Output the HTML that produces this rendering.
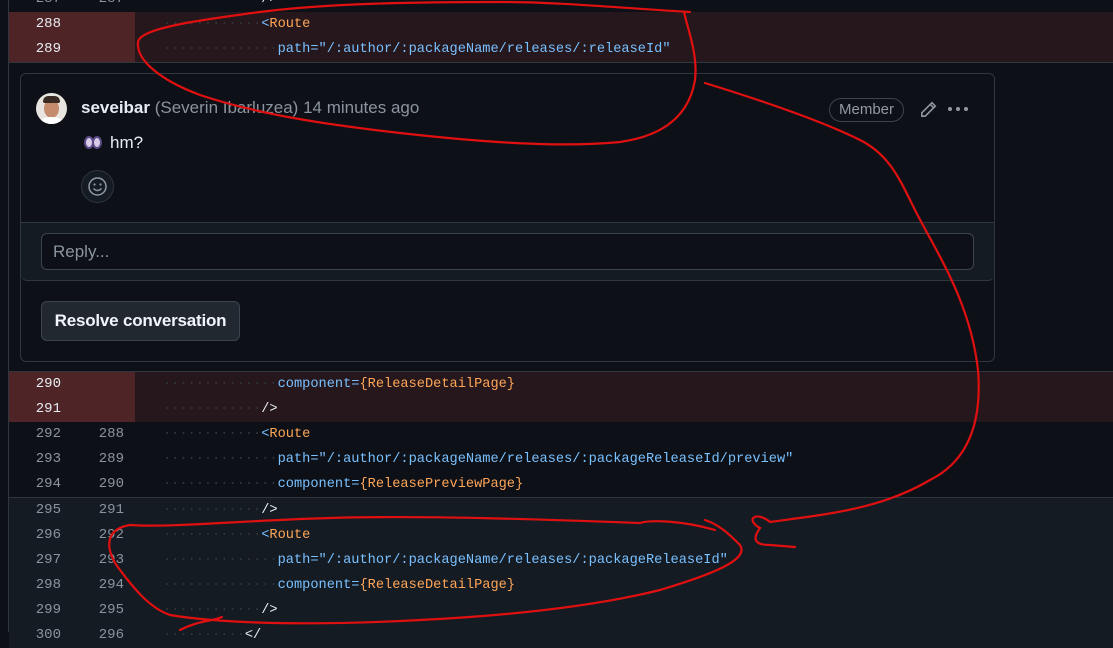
<!DOCTYPE html>
<html><head><style>
*{margin:0;padding:0;box-sizing:border-box}
body{width:1113px;height:632px;overflow:hidden;background:#0d1117;position:relative;font-family:"Liberation Sans",sans-serif}
.row{position:absolute;left:9px;right:0;height:25px;font-family:"Liberation Mono",monospace;font-size:13.65px;line-height:25px;color:#e6edf3}
.n1,.n2{position:absolute;top:0;text-align:right;color:#8b949e;font-size:14px}
.n1{left:0;width:52px}.n2{left:0;width:115px}
.c{position:absolute;left:154px;white-space:pre}
.d{color:#2f343b}
.del{background:#25171c}.del .nb{position:absolute;left:0;top:0;width:126px;height:25px;background:#4f2427}
.del .n1{color:#e6edf3}
.ctx{background:#151b23}
.b{color:#79c0ff}.o{color:#ffa657}
.vl{position:absolute;left:8px;top:0;width:1px;height:632px;background:#30363d}
</style></head><body>
<div class="vl"></div>
<div class="row" style="top:-13px"><span class="n1">287</span><span class="n2">287</span><span class="c"><span class="d">············</span>/&gt;</span></div>
<div class="row del" style="top:12px"><div class="nb"></div><span class="n1">288</span><span class="c"><span class="d">············</span><span class="b">&lt;</span><span class="o">Route</span></span></div>
<div class="row del" style="top:37px"><div class="nb"></div><span class="n1">289</span><span class="c"><span class="d">··············</span><span class="b">path="/:author/:packageName/releases/:releaseId"</span></span></div>
<div style="position:absolute;left:9px;right:0;top:62px;height:1px;background:#30363d"></div>

<div style="position:absolute;left:20px;top:73px;width:975px;height:289px;border:1px solid #30363d;border-radius:6px;background:#0d1117">
 <div style="position:absolute;left:15px;top:19px;width:31px;height:31px;border-radius:50%;background:#e8e4e0;overflow:hidden"><div style="position:absolute;left:8px;top:6px;width:15px;height:19px;border-radius:50%;background:#c48b6c"></div><div style="position:absolute;left:7px;top:3px;width:17px;height:7px;border-radius:6px 6px 2px 2px;background:#3a2a22"></div><div style="position:absolute;left:4px;top:24px;width:23px;height:10px;border-radius:50%;background:#fff"></div></div>
 <div style="position:absolute;left:60px;top:24px;font-size:17px;color:#8b949e;white-space:nowrap"><b style="color:#e6edf3">seveibar</b> (Severin Ibarluzea) 14 minutes ago</div>
 <div style="position:absolute;left:808px;top:24px;width:75px;height:24px;border:1px solid #3d444d;border-radius:12px;color:#9198a1;font-size:15px;text-align:center;line-height:22px">Member</div>
 <svg style="position:absolute;left:898px;top:27px" width="18" height="18" viewBox="0 0 16 16"><path d="M11.5 1.5l3 3-9 9H2.5v-3z M10 3l3 3" fill="none" stroke="#9198a1" stroke-width="1.4"/></svg>
 <div style="position:absolute;left:927px;top:33px;width:20px;height:4px"><span style="position:absolute;left:0;width:4px;height:4px;border-radius:50%;background:#9198a1"></span><span style="position:absolute;left:8px;width:4px;height:4px;border-radius:50%;background:#9198a1"></span><span style="position:absolute;left:16px;width:4px;height:4px;border-radius:50%;background:#9198a1"></span></div>
 <div style="position:absolute;left:63px;top:62px;width:10px;height:13px;border-radius:50%;background:#d8cce8;border:2px solid #5a4a86"></div>
 <div style="position:absolute;left:71px;top:62px;width:10px;height:13px;border-radius:50%;background:#d8cce8;border:2px solid #5a4a86"></div>
 <div style="position:absolute;left:89px;top:59px;font-size:17px;color:#e6edf3">hm?</div>
 <div style="position:absolute;left:60px;top:96px;width:33px;height:33px;border-radius:50%;border:1px solid #30363d;background:#151b23"><svg width="31" height="31" viewBox="0 0 31 31"><circle cx="15.5" cy="15.5" r="8.5" fill="none" stroke="#9198a1" stroke-width="1.5"/><circle cx="12.5" cy="13.5" r="1.1" fill="#9198a1"/><circle cx="18.5" cy="13.5" r="1.1" fill="#9198a1"/><path d="M11.5 17.5q4 4 8 0" fill="none" stroke="#9198a1" stroke-width="1.4"/></svg></div>
 <div style="position:absolute;left:0;top:148px;width:973px;height:59px;border-top:1px solid #30363d;border-bottom:1px solid #30363d;border-radius:0 0 6px 6px;background:#151b23">
  <div style="position:absolute;left:20px;top:10px;width:933px;height:37px;border:1px solid #3d444d;border-radius:6px;background:#0d1117;color:#8b949e;font-size:17px;line-height:35px;padding-left:11px">Reply...</div>
 </div>
 <div style="position:absolute;left:20px;top:227px;width:199px;height:40px;border:1px solid #3d444d;border-radius:6px;background:#212830;color:#f0f6fc;font-size:17px;font-weight:bold;line-height:38px;text-align:center;letter-spacing:-0.2px">Resolve conversation</div>
</div>

<div style="position:absolute;left:9px;right:0;top:371px;height:1px;background:#30363d"></div>
<div class="row del" style="top:372px"><div class="nb"></div><span class="n1">290</span><span class="c"><span class="d">··············</span><span class="b">component=</span><span class="o">{ReleaseDetailPage}</span></span></div>
<div class="row del" style="top:397px"><div class="nb"></div><span class="n1">291</span><span class="c"><span class="d">············</span>/&gt;</span></div>
<div class="row" style="top:422px"><span class="n1">292</span><span class="n2">288</span><span class="c"><span class="d">············</span><span class="b">&lt;</span><span class="o">Route</span></span></div>
<div class="row" style="top:447px"><span class="n1">293</span><span class="n2">289</span><span class="c"><span class="d">··············</span><span class="b">path="/:author/:packageName/releases/:packageReleaseId/preview"</span></span></div>
<div class="row" style="top:472px"><span class="n1">294</span><span class="n2">290</span><span class="c"><span class="d">··············</span><span class="b">component=</span><span class="o">{ReleasePreviewPage}</span></span></div>
<div style="position:absolute;left:9px;right:0;top:497px;height:1px;background:#30363d"></div>
<div class="row ctx" style="top:498px"><span class="n1">295</span><span class="n2">291</span><span class="c"><span class="d">············</span>/&gt;</span></div>
<div class="row ctx" style="top:523px"><span class="n1">296</span><span class="n2">292</span><span class="c"><span class="d">············</span><span class="b">&lt;</span><span class="o">Route</span></span></div>
<div class="row ctx" style="top:548px"><span class="n1">297</span><span class="n2">293</span><span class="c"><span class="d">··············</span><span class="b">path="/:author/:packageName/releases/:packageReleaseId"</span></span></div>
<div class="row ctx" style="top:573px"><span class="n1">298</span><span class="n2">294</span><span class="c"><span class="d">··············</span><span class="b">component=</span><span class="o">{ReleaseDetailPage}</span></span></div>
<div class="row ctx" style="top:598px"><span class="n1">299</span><span class="n2">295</span><span class="c"><span class="d">············</span>/&gt;</span></div>
<div class="row ctx" style="top:623px"><span class="n1">300</span><span class="n2">296</span><span class="c"><span class="d">··········</span>&lt;/</span></div>

<svg style="position:absolute;left:0;top:0" width="1113" height="632" viewBox="0 0 1113 632"><g fill="none" stroke="#e01010" stroke-width="2.2" stroke-linecap="round">
<path d="M690 12 C620 8 560 2 500 2 C420 2 330 3 260 12 C200 20 140 28 138 42 C136 60 160 80 200 95 C260 115 330 125 400 133 C480 142 560 148 620 142 C670 135 690 110 695 80 C698 55 688 30 684 12"/>
<path d="M705 83 C760 100 820 120 860 140 C890 155 900 180 915 210 C935 250 970 300 978 370 C982 420 970 460 930 480 C880 510 820 515 770 522 M770 522 C755 510 745 520 760 528 C755 535 750 545 770 545 L795 547"/>
<path d="M715 530 C680 520 650 520 640 523 C560 520 420 515 330 518 C250 520 170 528 130 525 C100 530 108 555 120 570 C135 590 150 608 170 615 C230 625 330 625 420 620 C520 615 600 605 660 590 C710 575 750 560 740 545 C730 535 720 525 705 520"/>
<path d="M180 630 C200 620 210 622 222 617"/>
</g></svg>
</body></html>
